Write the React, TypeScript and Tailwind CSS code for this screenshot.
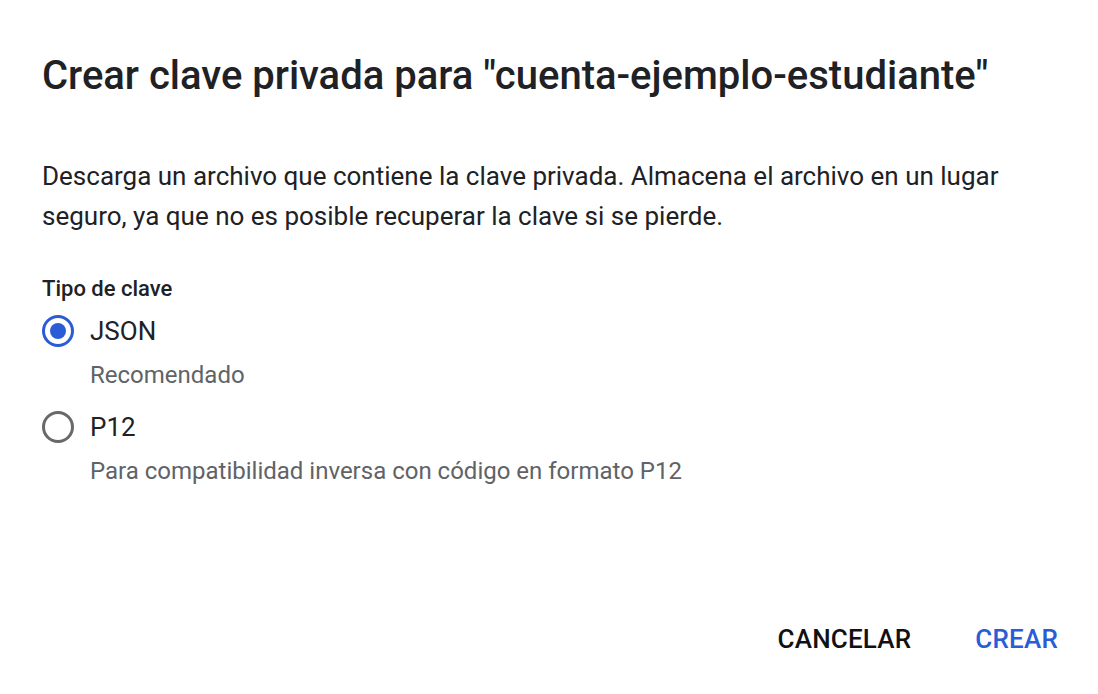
export default function App() {
  return (
    <div className="flex h-[694px] w-[1098px] flex-col bg-white font-['Roboto',sans-serif]">
      <h1 className="ml-[42px] mt-[52px] text-[40px] font-medium leading-[48px] text-[#202124]">
        Crear clave privada para "cuenta-ejemplo-estudiante"
      </h1>

      <p className="ml-[42px] mr-[60px] mt-[56px] text-[26px] leading-[40px] text-[#202124]">
        Descarga un archivo que contiene la clave privada. Almacena el archivo en un lugar seguro, ya que no es posible recuperar la clave si se pierde.
      </p>

      <div className="ml-[42px] mt-[39px]">
        <div className="text-[22px] font-medium leading-[28px] text-[#202124]">Tipo de clave</div>

        <div className="mt-[8px]">
          <RadioOption checked label="JSON" hint="Recomendado" />
        </div>
        <div className="mt-[12px]">
          <RadioOption label="P12" hint="Para compatibilidad inversa con código en formato P12" />
        </div>
      </div>

      <div className="mr-[40px] mt-auto mb-[35px] flex justify-end gap-[64px]">
        <button type="button" className="text-[26px] font-medium leading-[40px] tracking-[0.2px] text-[#111111]">
          CANCELAR
        </button>
        <button type="button" className="text-[26px] font-medium leading-[40px] tracking-[0.2px] text-[#2a5cd6]">
          CREAR
        </button>
      </div>
    </div>
  );
}

function RadioOption({ checked, label, hint }: { checked?: boolean; label: string; hint: string }) {
  return (
    <div>
      <div className="flex items-center gap-[16px]">
        {checked ? (
          <span className="flex h-[32px] w-[32px] items-center justify-center rounded-full border-[3px] border-[#2a5cd6]">
            <span className="h-[16px] w-[16px] rounded-full bg-[#2a5cd6]" />
          </span>
        ) : (
          <span className="h-[32px] w-[32px] rounded-full border-[3px] border-[#696969]" />
        )}
        <span className="text-[26px] leading-[40px] text-[#202124]">{label}</span>
      </div>
      <div className="ml-[48px] mt-[4px] text-[24px] leading-[40px] text-[#5f6368]">{hint}</div>
    </div>
  );
}
